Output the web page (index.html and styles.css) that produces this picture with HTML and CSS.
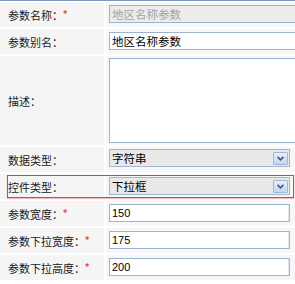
FILE: index.html
```html
<!DOCTYPE html>
<html>
<head>
<meta charset="utf-8">
<link rel="stylesheet" href="styles.css">
</head>
<body>
<div class="form">
  <div class="row">
    <div class="label">参数名称：<span class="req">*</span></div>
    <div class="field"><input class="text wide disabled" value="地区名称参数" disabled></div>
  </div>
  <div class="row">
    <div class="label">参数别名：</div>
    <div class="field"><input class="text wide" value="地区名称参数"></div>
  </div>
  <div class="row tall">
    <div class="label">描述：</div>
    <div class="field"><textarea class="area"></textarea></div>
  </div>
  <div class="row sel-row">
    <div class="label">数据类型：</div>
    <div class="field">
      <div class="select"><span class="sel-text">字符串</span><span class="sel-btn"><svg width="15" height="13" viewBox="0 0 15 13"><path d="M4 4.5 L7.5 8 L11 4.5" fill="none" stroke="#44577f" stroke-width="2"/></svg></span></div>
    </div>
  </div>
  <div class="row sel-row highlight">
    <div class="label">控件类型：</div>
    <div class="field">
      <div class="select"><span class="sel-text">下拉框</span><span class="sel-btn"><svg width="15" height="13" viewBox="0 0 15 13"><path d="M4 4.5 L7.5 8 L11 4.5" fill="none" stroke="#44577f" stroke-width="2"/></svg></span></div>
    </div>
    <div class="hl-box"></div>
  </div>
  <div class="row">
    <div class="label">参数宽度：<span class="req">*</span></div>
    <div class="field"><input class="text num" value="150"></div>
  </div>
  <div class="row">
    <div class="label">参数下拉宽度：<span class="req">*</span></div>
    <div class="field"><input class="text num" value="175"></div>
  </div>
  <div class="row">
    <div class="label">参数下拉高度：<span class="req">*</span></div>
    <div class="field"><input class="text num" value="200"></div>
  </div>
</div>
</body>
</html>
```
FILE: styles.css
```css
html, body {
  margin: 0;
  padding: 0;
  overflow: hidden;
  background: #ffffff;
}
body {
  width: 295px;
  height: 284px;
  font-family: "Liberation Sans", "Noto Sans CJK SC", sans-serif;
  font-size: 11px;
  color: #111;
}
.form {
  border-top: 1px solid #7d98bf;
  padding-top: 1px;
  display: flex;
  flex-direction: column;
  gap: 2px;
}
.row {
  display: flex;
  gap: 2px;
  height: 25px;
}
.row.tall {
  height: 89px;
}
.row.highlight {
  position: relative;
}
.hl-box {
  position: absolute;
  left: 7px;
  right: 1px;
  top: 1px;
  bottom: 1px;
  border: 1px solid #f03a3a;
  box-shadow: 0 1px 1px rgba(240, 80, 80, 0.35);
  pointer-events: none;
}
.label {
  width: 104px;
  flex: none;
  box-sizing: border-box;
  padding-left: 8px;
  background: #f5f5f5;
  display: flex;
  align-items: center;
  white-space: nowrap;
  color: #1a1a1a;
}
.req {
  color: #e32020;
  font-family: "Liberation Sans", sans-serif;
  font-size: 11px;
  position: relative;
  top: -1px;
}
.field {
  flex: 1;
  background: #f7f7f7;
  padding-left: 3px;
  padding-top: 3px;
  box-sizing: border-box;
  min-width: 0;
}
.text {
  display: block;
  box-sizing: border-box;
  height: 18px;
  width: 181px;
  margin: 0;
  border: 1px solid #9db3cf;
  border-right-color: #a9bcd4;
  box-shadow: inset -1px 0 0 #dce5ef;
  padding: 0 2px;
  font-family: "Liberation Sans", "Noto Sans CJK SC", sans-serif;
  font-size: 11px;
  color: #000;
  background: #fff;
  outline: none;
}
.text.wide {
  width: 200px;
  font-size: 11.5px;
}
.text.disabled {
  background: #ececec;
  color: #a3a3a3;
  -webkit-text-fill-color: #a3a3a3;
  opacity: 1;
}
.row.tall .field {
  padding-top: 2px;
}
.area {
  display: block;
  box-sizing: border-box;
  width: 200px;
  height: 85px;
  margin: 0;
  border: 1px solid #9db3cf;
  background: #fff;
  resize: none;
  outline: none;
}
.sel-row .field {
  padding-top: 2px;
}
.row.highlight .field {
  padding-top: 3px;
}
.select {
  box-sizing: border-box;
  width: 181px;
  height: 18px;
  border: 1px solid #a3b7cf;
  background: #e9e9e9;
  display: flex;
  align-items: center;
  justify-content: space-between;
  padding-left: 2px;
  padding-right: 1px;
}
.sel-text {
  font-size: 11.5px;
  color: #000;
}
.sel-btn {
  width: 15px;
  height: 13px;
  box-sizing: border-box;
  border: 1px solid #9fb6d6;
  border-radius: 1px;
  background: linear-gradient(#e6eefb, #c4d5f2);
  display: flex;
}
.sel-btn svg {
  display: block;
  width: 13px;
  height: 11px;
}
```
